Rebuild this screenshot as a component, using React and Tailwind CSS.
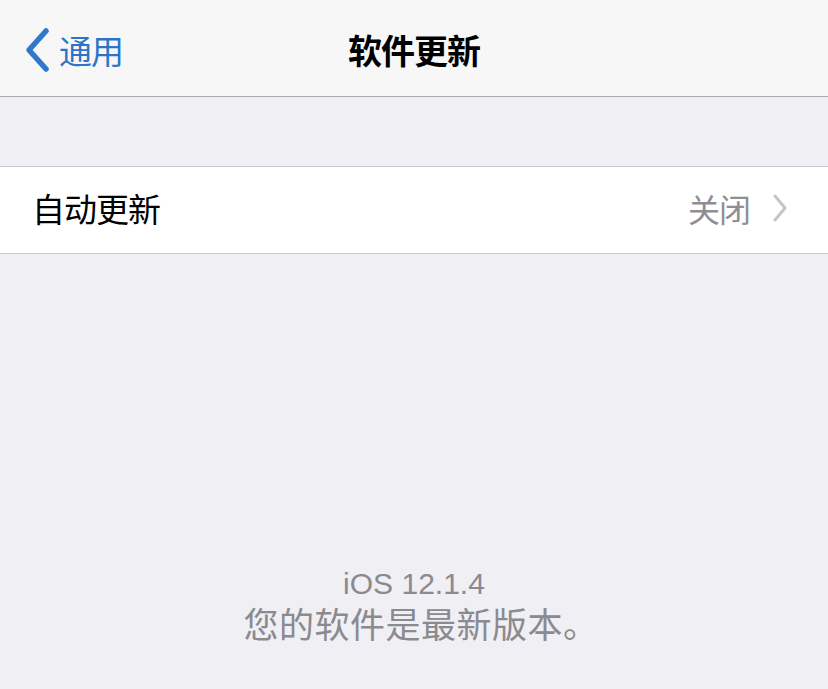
import React from "react";

const font = { fontFamily: '"Noto Sans CJK SC", "Noto Sans", sans-serif' };

export default function App() {
  return (
    <div
      className="w-[828px] h-[689px] bg-[#efeff4] flex flex-col overflow-hidden"
      style={font}
    >
      <div className="h-[97px] shrink-0 bg-[#f7f7f8] border-b border-[#a9a9ab] flex items-center relative">
        <div className="flex items-center pl-[22px] pt-[4px]">
          <svg width="30" height="46" viewBox="0 0 30 46">
            <path d="M24 4 L7 23 L24 42" fill="none" stroke="#2f78cc" strokeWidth="5.5" strokeLinecap="round" strokeLinejoin="round" />
          </svg>
          <span className="text-[33px] text-[#2c74c8] leading-none ml-[7px] tracking-[-1px]">通用</span>
        </div>
        <div className="absolute left-0 right-0 top-0 bottom-0 flex items-center justify-center pointer-events-none">
          <span className="text-[34px] font-bold text-black leading-none tracking-[-1px] pt-[4px]">软件更新</span>
        </div>
      </div>
      <div className="h-[69px] shrink-0" />
      <div className="h-[88px] shrink-0 bg-white border-y border-[#c8c7cc] flex items-center pl-[32px] pr-[40px]">
        <span className="text-[33px] text-black leading-none tracking-[-1px] pb-[4px]">自动更新</span>
        <span className="ml-auto text-[32px] text-[#8e8e93] leading-none tracking-[-1px] pb-[4px]">关闭</span>
        <svg width="16" height="30" viewBox="0 0 16 30" className="ml-[22px] mb-[4px]">
          <path d="M3 3 L13 15 L3 27" fill="none" stroke="#c4c4c9" strokeWidth="3" strokeLinecap="round" strokeLinejoin="round" />
        </svg>
      </div>
      <div className="flex-1 flex flex-col items-center">
        <div className="h-[313px] shrink-0" />
        <div
          className="text-[30px] text-[#8a8a8f] leading-[34px]"
          style={{ fontFamily: '"Liberation Sans", "Noto Sans", sans-serif' }}
        >
          iOS 12.1.4
        </div>
        <div className="text-[35px] text-[#8a8a8f] leading-[48px] mt-[-2px] tracking-[0.5px] pl-[14px]">您的软件是最新版本。</div>
      </div>
    </div>
  );
}
